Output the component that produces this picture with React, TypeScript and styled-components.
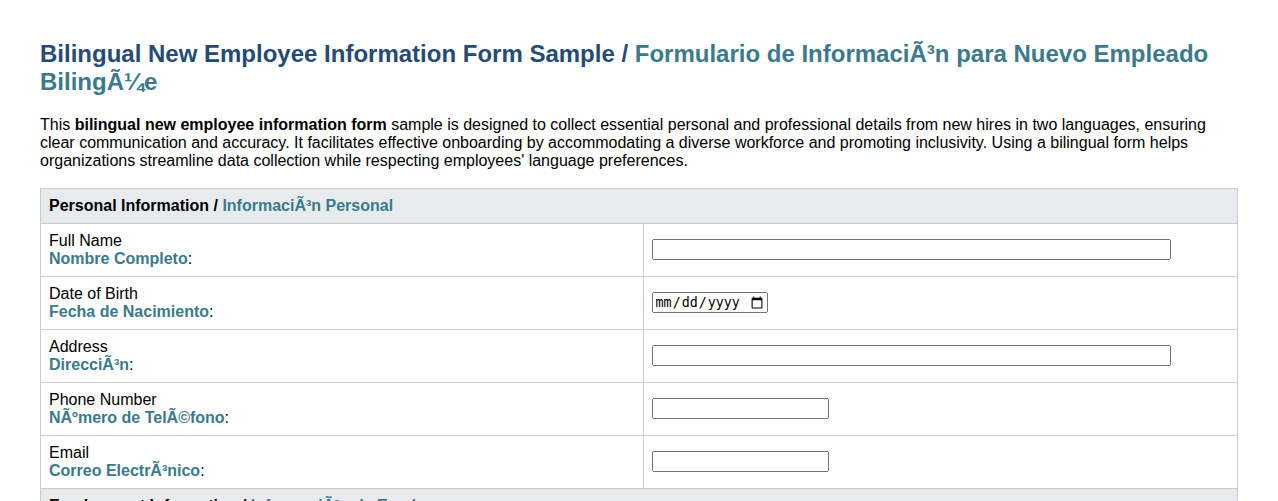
import React from "react";
import styled, { createGlobalStyle } from "styled-components";

const Global = createGlobalStyle`
  html, body { margin: 0; padding: 0; background: #fff; }
  body { font-family: "Liberation Sans", Arial, sans-serif; color: #000; }
`;

const Page = styled.div`
  padding: 40px 40px 40px;
`;

const Title = styled.h1`
  margin: 0 0 20px;
  font-size: 24px;
  font-weight: bold;
  color: #264a78;
  line-height: normal;
`;

const Es = styled.span`
  color: #3a7a8c;
  font-weight: bold;
`;

const Intro = styled.p`
  margin: 0 0 18px;
  font-size: 16px;
  line-height: normal;
`;

const Table = styled.table`
  width: 100%;
  border-collapse: collapse;
  font-size: 16px;
`;

const SectionHead = styled.th`
  background: #e8ebee;
  border: 1px solid #cccccc;
  padding: 8px;
  text-align: left;
  font-weight: bold;
`;

const LabelCell = styled.td`
  border: 1px solid #cccccc;
  padding: 8px;
  vertical-align: middle;
  width: 50.34%;
`;

const InputCell = styled.td`
  border: 1px solid #cccccc;
  padding: 8px;
  vertical-align: middle;
`;

const En = styled.span`
  display: block;
`;

const Field = styled.input<{ $w: string }>`
  box-sizing: border-box;
  width: ${(p) => p.$w};
  height: 21px;
  vertical-align: middle;
  margin: -1px 0 0;
`;

type Row = { en: string; es: string; type: string; w: string };

const sections: { en: string; es: string; rows: Row[] }[] = [
  {
    en: "Personal Information",
    es: "InformaciÃ³n Personal",
    rows: [
      { en: "Full Name", es: "Nombre Completo", type: "text", w: "90%" },
      { en: "Date of Birth", es: "Fecha de Nacimiento", type: "date", w: "116px" },
      { en: "Address", es: "DirecciÃ³n", type: "text", w: "90%" },
      { en: "Phone Number", es: "NÃºmero de TelÃ©fono", type: "tel", w: "177px" },
      { en: "Email", es: "Correo ElectrÃ³nico", type: "email", w: "177px" },
    ],
  },
  {
    en: "Employment Information",
    es: "InformaciÃ³n de Empleo",
    rows: [
      { en: "Job Title", es: "Puesto", type: "text", w: "90%" },
      { en: "Start Date", es: "Fecha de Inicio", type: "date", w: "116px" },
    ],
  },
];

export default function App() {
  return (
    <Page>
      <Global />
      <Title>
        Bilingual New Employee Information Form Sample /{" "}
        <Es>Formulario de InformaciÃ³n para Nuevo Empleado BilingÃ¼e</Es>
      </Title>
      <Intro>
        This <b>bilingual new employee information form</b> sample is designed to
        collect essential personal and professional details from new hires in two
        languages, ensuring clear communication and accuracy. It facilitates
        effective onboarding by accommodating a diverse workforce and promoting
        inclusivity. Using a bilingual form helps organizations streamline data
        collection while respecting employees' language preferences.
      </Intro>
      <Table>
        <tbody>
          {sections.map((s) => (
            <React.Fragment key={s.en}>
              <tr>
                <SectionHead colSpan={2}>
                  {s.en} / <Es>{s.es}</Es>
                </SectionHead>
              </tr>
              {s.rows.map((r) => (
                <tr key={r.en}>
                  <LabelCell>
                    <En>{r.en}</En>
                    <Es>{r.es}</Es>:
                  </LabelCell>
                  <InputCell>
                    <Field type={r.type} $w={r.w} />
                  </InputCell>
                </tr>
              ))}
            </React.Fragment>
          ))}
        </tbody>
      </Table>
    </Page>
  );
}
